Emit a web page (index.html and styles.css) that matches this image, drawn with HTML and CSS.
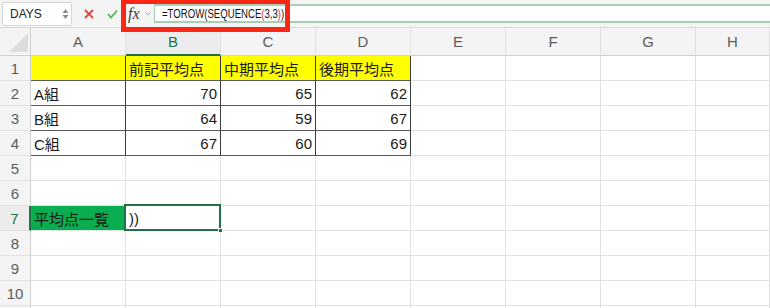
FILE: index.html
```html
<!DOCTYPE html>
<html lang="ja">
<head>
  <meta charset="UTF-8">
  <title>TOROW - SEQUENCE</title>
  <link rel="stylesheet" href="styles.css">
</head>
<body>
  <div class="toolbar">
    <div class="name-box">
      <span>DAYS</span>
      <span class="spinner">
        <svg width="7" height="14" viewBox="0 0 7 14"><path d="M3.5 2 L6.5 6 L0.5 6 Z M3.5 12 L6.5 8 L0.5 8 Z" fill="#8a8a8a"/></svg>
      </span>
    </div>
    <svg class="cancel" width="10" height="10" viewBox="0 0 10 10"><path d="M1 1 L9 9 M9 1 L1 9" stroke="#e2453c" stroke-width="1.8"/></svg>
    <svg class="confirm" width="11" height="10" viewBox="0 0 11 10"><path d="M1 5 L4 8.5 L10 1.5" stroke="#58b35b" stroke-width="1.8" fill="none"/></svg>
    <span class="fx">fx</span>
    <svg class="fx-menu" width="6" height="4" viewBox="0 0 6 4"><path d="M0.5 0.5 L3 3 L5.5 0.5" stroke="#b0b0b0" stroke-width="1" fill="none"/></svg>
    <div class="formula">
      <span class="formula-text">=TOROW(SEQUENCE<span class="paren">(</span>3,3<span class="paren">)</span>)<span class="caret"></span></span>
    </div>
    <div class="highlight"></div>
  </div>

  <div class="sheet">
    <div class="corner"><svg width="31" height="28" viewBox="0 0 31 28"><polygon points="28,5 28,24 9,24" fill="#dcdcdc"/></svg></div>
    <div class="ch">A</div>
    <div class="ch active">B</div>
    <div class="ch">C</div>
    <div class="ch">D</div>
    <div class="ch">E</div>
    <div class="ch">F</div>
    <div class="ch">G</div>
    <div class="ch">H</div>

    <div class="rh">1</div>
    <div class="c yellow bd"></div>
    <div class="c yellow bd">前記平均点</div>
    <div class="c yellow bd">中期平均点</div>
    <div class="c yellow bd">後期平均点</div>
    <div class="c"></div><div class="c"></div><div class="c"></div><div class="c"></div>

    <div class="rh">2</div>
    <div class="c bd">A組</div>
    <div class="c bd num">70</div>
    <div class="c bd num">65</div>
    <div class="c bd num">62</div>
    <div class="c"></div><div class="c"></div><div class="c"></div><div class="c"></div>

    <div class="rh">3</div>
    <div class="c bd">B組</div>
    <div class="c bd num">64</div>
    <div class="c bd num">59</div>
    <div class="c bd num">67</div>
    <div class="c"></div><div class="c"></div><div class="c"></div><div class="c"></div>

    <div class="rh">4</div>
    <div class="c bd">C組</div>
    <div class="c bd num">67</div>
    <div class="c bd num">60</div>
    <div class="c bd num">69</div>
    <div class="c"></div><div class="c"></div><div class="c"></div><div class="c"></div>

    <div class="rh">5</div>
    <div class="c"></div><div class="c"></div><div class="c"></div><div class="c"></div>
    <div class="c"></div><div class="c"></div><div class="c"></div><div class="c"></div>

    <div class="rh">6</div>
    <div class="c"></div><div class="c"></div><div class="c"></div><div class="c"></div>
    <div class="c"></div><div class="c"></div><div class="c"></div><div class="c"></div>

    <div class="rh active">7</div>
    <div class="c green">平均点一覧</div>
    <div class="c selected">))</div>
    <div class="c"></div><div class="c"></div>
    <div class="c"></div><div class="c"></div><div class="c"></div><div class="c"></div>

    <div class="rh">8</div>
    <div class="c"></div><div class="c"></div><div class="c"></div><div class="c"></div>
    <div class="c"></div><div class="c"></div><div class="c"></div><div class="c"></div>

    <div class="rh">9</div>
    <div class="c"></div><div class="c"></div><div class="c"></div><div class="c"></div>
    <div class="c"></div><div class="c"></div><div class="c"></div><div class="c"></div>

    <div class="rh">10</div>
    <div class="c"></div><div class="c"></div><div class="c"></div><div class="c"></div>
    <div class="c"></div><div class="c"></div><div class="c"></div><div class="c"></div>

    <div class="rh"></div>
    <div class="c"></div><div class="c"></div><div class="c"></div><div class="c"></div>
    <div class="c"></div><div class="c"></div><div class="c"></div><div class="c"></div>
  </div>
</body>
</html>
```

FILE: styles.css
```css
body {
  margin: 0;
  width: 770px;
  height: 308px;
  overflow: hidden;
  background-color: #ffffff;
  font-family: "Liberation Sans", "Noto Sans CJK JP", sans-serif;
  color: #1a1a1a;
}

/* formula bar */
.toolbar {
  position: relative;
  display: flex;
  align-items: center;
  height: 28px;
  box-sizing: border-box;
  background-color: #f4f4f4;
  border-bottom: 1px solid #d8d8d8;
}
.name-box {
  display: flex;
  align-items: center;
  justify-content: space-between;
  margin-left: 2px;
  width: 70px;
  height: 24px;
  box-sizing: border-box;
  padding: 0 2px 0 7px;
  background-color: #ffffff;
  border: 1px solid #d6d6d6;
  border-radius: 2px;
  font-size: 12px;
  color: #222;
}
.spinner {
  display: flex;
}
.cancel {
  margin-left: 12px;
}
.confirm {
  margin-left: 13px;
}
.fx {
  margin-left: 10px;
  font-family: "Liberation Serif", serif;
  font-style: italic;
  font-size: 16px;
  color: #3a3a3a;
}
.fx-menu {
  margin-left: 5px;
}
.formula {
  flex: 1;
  display: flex;
  align-items: center;
  margin-left: 3px;
  height: 19px;
  box-sizing: border-box;
  padding-left: 7px;
  background-color: #ffffff;
  border-top: 2px solid #a8cfb3;
  border-bottom: 2px solid #a8cfb3;
  border-left: 1px solid #a8cfb3;
  overflow: hidden;
}
.formula-text {
  display: inline-flex;
  align-items: center;
  font-size: 12px;
  color: #111;
  white-space: nowrap;
  transform: scaleX(0.8);
  transform-origin: left center;
}
.paren {
  color: #e0302a;
}
.caret {
  display: inline-block;
  width: 1px;
  height: 13px;
  margin-left: 2px;
  background-color: #111;
}
.highlight {
  position: absolute;
  left: 121px;
  top: -1px;
  width: 169px;
  height: 33px;
  box-sizing: border-box;
  border: 5px solid #fb2614;
}

/* grid */
.sheet {
  display: grid;
  grid-template-columns: 31px repeat(7, 95px) 1fr;
  grid-template-rows: 28px;
  grid-auto-rows: 25px;
}
.corner {
  background-color: #f4f4f4;
  border-right: 1px solid #cfcfcf;
  border-bottom: 1px solid #cfcfcf;
  box-sizing: border-box;
}
.corner svg {
  display: block;
}
.ch {
  display: flex;
  align-items: center;
  justify-content: center;
  box-sizing: border-box;
  background-color: #f4f4f4;
  border-right: 1px solid #e0e0e0;
  border-bottom: 1px solid #cfcfcf;
  font-size: 15px;
  color: #5c5c5c;
}
.ch.active {
  color: #217346;
  background-color: #ececec;
  border-bottom: 2px solid #217346;
}
.rh {
  display: flex;
  align-items: center;
  justify-content: center;
  box-sizing: border-box;
  background-color: #f4f4f4;
  border-right: 1px solid #cfcfcf;
  border-bottom: 1px solid #e2e2e2;
  font-size: 15px;
  color: #5c5c5c;
}
.rh.active {
  color: #217346;
  background-color: #ececec;
  border-right: 2px solid #217346;
}
.c {
  display: flex;
  align-items: center;
  box-sizing: border-box;
  padding: 0 3px;
  border-right: 1px solid #e0e0e0;
  border-bottom: 1px solid #e0e0e0;
  font-size: 15px;
  white-space: nowrap;
  overflow: hidden;
}
.c.num {
  justify-content: flex-end;
}
.c.bd {
  border-right-color: #3c3c3c;
  border-bottom-color: #5a5a5a;
}
.c.yellow {
  background-color: #ffff00;
}
.c.green {
  background-color: #0aad4f;
}
.c.selected {
  position: relative;
  overflow: visible;
}
.c.selected::before {
  content: "";
  position: absolute;
  left: -2px;
  top: -2px;
  right: -1px;
  bottom: -1px;
  border: 2px solid #217346;
}
.c.selected::after {
  content: "";
  position: absolute;
  right: -3px;
  bottom: -3px;
  width: 5px;
  height: 5px;
  background-color: #217346;
  border: 1px solid #ffffff;
  box-sizing: border-box;
}
```
